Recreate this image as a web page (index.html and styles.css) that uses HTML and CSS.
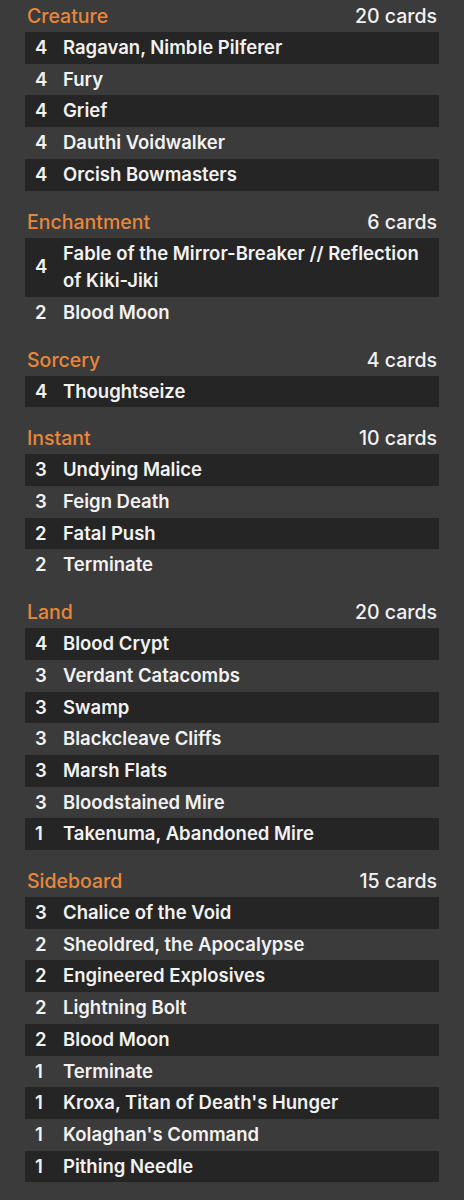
FILE: index.html
```html
<!DOCTYPE html>
<html lang="en">

<head>
    <meta charset="UTF-8">
    <meta name="viewport" content="width=device-width, initial-scale=1.0">
    <title>Decklist</title>
    <link rel="stylesheet" href="styles.css">
</head>

<body>
    <div class="deck">
        <section class="group">
            <div class="group-head"><span class="type">Creature</span><span class="count">20 cards</span></div>
            <ul class="cards">
                <li><span class="qty">4</span><span class="name">Ragavan, Nimble Pilferer</span></li>
                <li><span class="qty">4</span><span class="name">Fury</span></li>
                <li><span class="qty">4</span><span class="name">Grief</span></li>
                <li><span class="qty">4</span><span class="name">Dauthi Voidwalker</span></li>
                <li><span class="qty">4</span><span class="name">Orcish Bowmasters</span></li>
            </ul>
        </section>
        <section class="group">
            <div class="group-head"><span class="type">Enchantment</span><span class="count">6 cards</span></div>
            <ul class="cards">
                <li><span class="qty">4</span><span class="name">Fable of the Mirror-Breaker // Reflection of Kiki-Jiki</span></li>
                <li><span class="qty">2</span><span class="name">Blood Moon</span></li>
            </ul>
        </section>
        <section class="group">
            <div class="group-head"><span class="type">Sorcery</span><span class="count">4 cards</span></div>
            <ul class="cards">
                <li><span class="qty">4</span><span class="name">Thoughtseize</span></li>
            </ul>
        </section>
        <section class="group">
            <div class="group-head"><span class="type">Instant</span><span class="count">10 cards</span></div>
            <ul class="cards">
                <li><span class="qty">3</span><span class="name">Undying Malice</span></li>
                <li><span class="qty">3</span><span class="name">Feign Death</span></li>
                <li><span class="qty">2</span><span class="name">Fatal Push</span></li>
                <li><span class="qty">2</span><span class="name">Terminate</span></li>
            </ul>
        </section>
        <section class="group">
            <div class="group-head"><span class="type">Land</span><span class="count">20 cards</span></div>
            <ul class="cards">
                <li><span class="qty">4</span><span class="name">Blood Crypt</span></li>
                <li><span class="qty">3</span><span class="name">Verdant Catacombs</span></li>
                <li><span class="qty">3</span><span class="name">Swamp</span></li>
                <li><span class="qty">3</span><span class="name">Blackcleave Cliffs</span></li>
                <li><span class="qty">3</span><span class="name">Marsh Flats</span></li>
                <li><span class="qty">3</span><span class="name">Bloodstained Mire</span></li>
                <li><span class="qty">1</span><span class="name">Takenuma, Abandoned Mire</span></li>
            </ul>
        </section>
        <section class="group">
            <div class="group-head"><span class="type">Sideboard</span><span class="count">15 cards</span></div>
            <ul class="cards">
                <li><span class="qty">3</span><span class="name">Chalice of the Void</span></li>
                <li><span class="qty">2</span><span class="name">Sheoldred, the Apocalypse</span></li>
                <li><span class="qty">2</span><span class="name">Engineered Explosives</span></li>
                <li><span class="qty">2</span><span class="name">Lightning Bolt</span></li>
                <li><span class="qty">2</span><span class="name">Blood Moon</span></li>
                <li><span class="qty">1</span><span class="name">Terminate</span></li>
                <li><span class="qty">1</span><span class="name">Kroxa, Titan of Death's Hunger</span></li>
                <li><span class="qty">1</span><span class="name">Kolaghan's Command</span></li>
                <li><span class="qty">1</span><span class="name">Pithing Needle</span></li>
            </ul>
        </section>
    </div>
</body>

</html>
```

FILE: styles.css
```css
* {
    margin: 0;
    padding: 0;
    list-style: none;
    box-sizing: border-box;
}

body {
    background: #3b3b3b;
    color: #f2f2f2;
    font-family: Inter, "Liberation Sans", sans-serif;
    font-size: 18.5px;
    font-weight: 600;
}

.deck {
    padding: 0 25px;
}

.group + .group {
    margin-top: 15px;
}

.group-head {
    height: 32px;
    display: flex;
    justify-content: space-between;
    align-items: center;
    padding: 0 2px;
    font-size: 19.5px;
}

.type {
    color: #e8873a;
    font-weight: 500;
}

.count {
    font-weight: 500;
}

.cards li {
    display: flex;
    align-items: center;
    padding: 2px 10px;
    line-height: 27.7px;
}

.cards li:nth-child(odd) {
    background: #252525;
}

.qty {
    width: 28px;
    flex-shrink: 0;
}
```
